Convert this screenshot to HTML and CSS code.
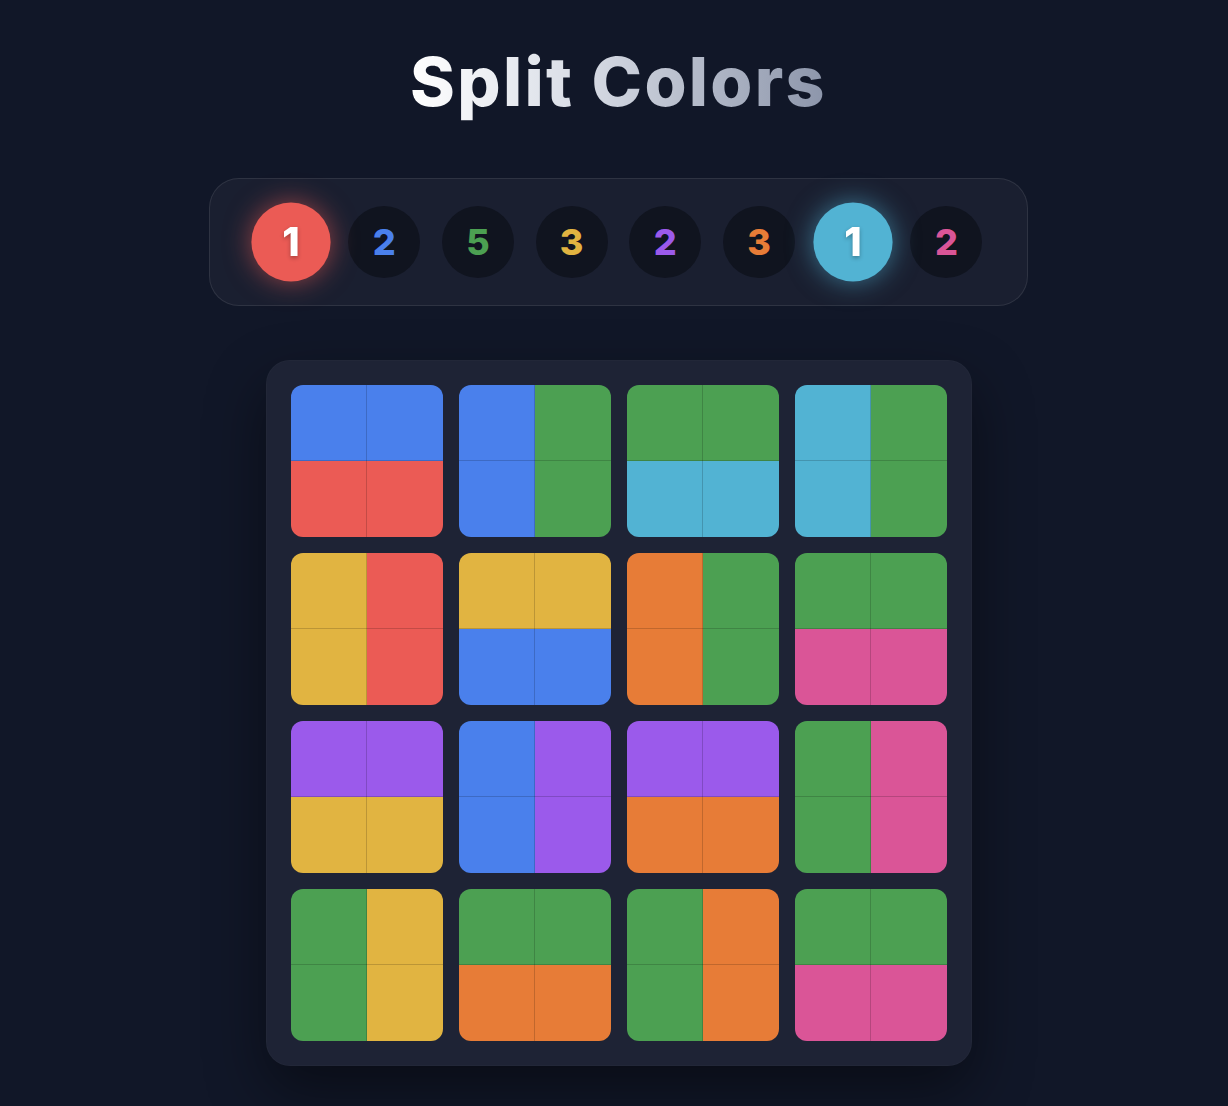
FILE: index.html
```html
<!DOCTYPE html>
<html lang="en">
<head>
<meta charset="utf-8">
<title>Split Colors</title>
<link rel="stylesheet" href="styles.css">
</head>
<body>
<main class="app">
  <h1 class="title">Split Colors</h1>

  <div class="counters">
    <div class="counter active red">1</div>
    <div class="counter t-blue">2</div>
    <div class="counter t-green">5</div>
    <div class="counter t-yellow">3</div>
    <div class="counter t-purple">2</div>
    <div class="counter t-orange">3</div>
    <div class="counter active cyan">1</div>
    <div class="counter t-pink">2</div>
  </div>

  <div class="board">
    <div class="tile"><div class="c blue"></div><div class="c blue"></div><div class="c red"></div><div class="c red"></div></div>
    <div class="tile"><div class="c blue"></div><div class="c green"></div><div class="c blue"></div><div class="c green"></div></div>
    <div class="tile"><div class="c green"></div><div class="c green"></div><div class="c cyan"></div><div class="c cyan"></div></div>
    <div class="tile"><div class="c cyan"></div><div class="c green"></div><div class="c cyan"></div><div class="c green"></div></div>

    <div class="tile"><div class="c yellow"></div><div class="c red"></div><div class="c yellow"></div><div class="c red"></div></div>
    <div class="tile"><div class="c yellow"></div><div class="c yellow"></div><div class="c blue"></div><div class="c blue"></div></div>
    <div class="tile"><div class="c orange"></div><div class="c green"></div><div class="c orange"></div><div class="c green"></div></div>
    <div class="tile"><div class="c green"></div><div class="c green"></div><div class="c pink"></div><div class="c pink"></div></div>

    <div class="tile"><div class="c purple"></div><div class="c purple"></div><div class="c yellow"></div><div class="c yellow"></div></div>
    <div class="tile"><div class="c blue"></div><div class="c purple"></div><div class="c blue"></div><div class="c purple"></div></div>
    <div class="tile"><div class="c purple"></div><div class="c purple"></div><div class="c orange"></div><div class="c orange"></div></div>
    <div class="tile"><div class="c green"></div><div class="c pink"></div><div class="c green"></div><div class="c pink"></div></div>

    <div class="tile"><div class="c green"></div><div class="c yellow"></div><div class="c green"></div><div class="c yellow"></div></div>
    <div class="tile"><div class="c green"></div><div class="c green"></div><div class="c orange"></div><div class="c orange"></div></div>
    <div class="tile"><div class="c green"></div><div class="c orange"></div><div class="c green"></div><div class="c orange"></div></div>
    <div class="tile"><div class="c green"></div><div class="c green"></div><div class="c pink"></div><div class="c pink"></div></div>
  </div>
</main>
</body>
</html>
```

FILE: styles.css
```css
* { box-sizing: border-box; }

html, body {
  margin: 0;
  background: #111728;
  min-height: 100%;
}

body {
  font-family: Inter, "Noto Sans", "Liberation Sans", sans-serif;
  font-optical-sizing: none;
  color: #fff;
}

.app {
  display: flex;
  flex-direction: column;
  align-items: center;
  padding: 41px 0 40px 9px;
}

.title {
  margin: 0 0 55px;
  font-size: 68px;
  line-height: 1.2;
  font-weight: 800;
  letter-spacing: 2.3px;
  background: linear-gradient(90deg, #ffffff 0%, #d9dde6 40%, #8c95aa 100%);
  -webkit-background-clip: text;
  background-clip: text;
  color: transparent;
}

.counters {
  display: flex;
  align-items: center;
  gap: 21.7px;
  padding: 27px 44.5px;
  background: #1a1f30;
  border: 1px solid rgba(255, 255, 255, 0.09);
  border-radius: 30px;
  margin-bottom: 54px;
}

.counter {
  width: 72px;
  height: 72px;
  border-radius: 50%;
  background: #10141f;
  display: flex;
  align-items: center;
  justify-content: center;
  font-size: 36px;
  font-weight: 800;
  line-height: 1;
}

.counter.active {
  transform: scale(1.1);
  color: #fff;
  text-shadow: 0 2px 4px rgba(0, 0, 0, 0.3);
}

.counter.active.red {
  background: #eb5b55;
  box-shadow: 0 0 24px rgba(235, 91, 85, 0.6);
}

.counter.active.cyan {
  background: #52b3d3;
  box-shadow: 0 0 24px rgba(82, 179, 211, 0.6);
}

.t-blue { color: #4a80ec; }
.t-green { color: #4ca052; }
.t-yellow { color: #e1b441; }
.t-purple { color: #9b5aeb; }
.t-orange { color: #e77c37; }
.t-pink { color: #da5597; }

.board {
  display: grid;
  grid-template-columns: repeat(4, 152px);
  grid-auto-rows: 152px;
  gap: 16px;
  padding: 24px;
  background: #1e2335;
  border: 1px solid rgba(255, 255, 255, 0.02);
  border-radius: 24px;
  box-shadow: 0 25px 60px rgba(0, 0, 0, 0.45);
}

.tile {
  position: relative;
  display: grid;
  grid-template-columns: 1fr 1fr;
  grid-template-rows: 1fr 1fr;
  border-radius: 12px;
  overflow: hidden;
}

.tile::before,
.tile::after {
  content: "";
  position: absolute;
  background: rgba(0, 0, 0, 0.17);
}

.tile::before {
  left: 75.5px;
  top: 0;
  bottom: 0;
  width: 1.3px;
}

.tile::after {
  top: 75.5px;
  left: 0;
  right: 0;
  height: 1.3px;
}

.c.blue { background: #4a80ec; }
.c.red { background: #eb5b55; }
.c.green { background: #4ca052; }
.c.cyan { background: #52b3d3; }
.c.yellow { background: #e1b441; }
.c.orange { background: #e77c37; }
.c.pink { background: #da5597; }
.c.purple { background: #9b5aeb; }
```
